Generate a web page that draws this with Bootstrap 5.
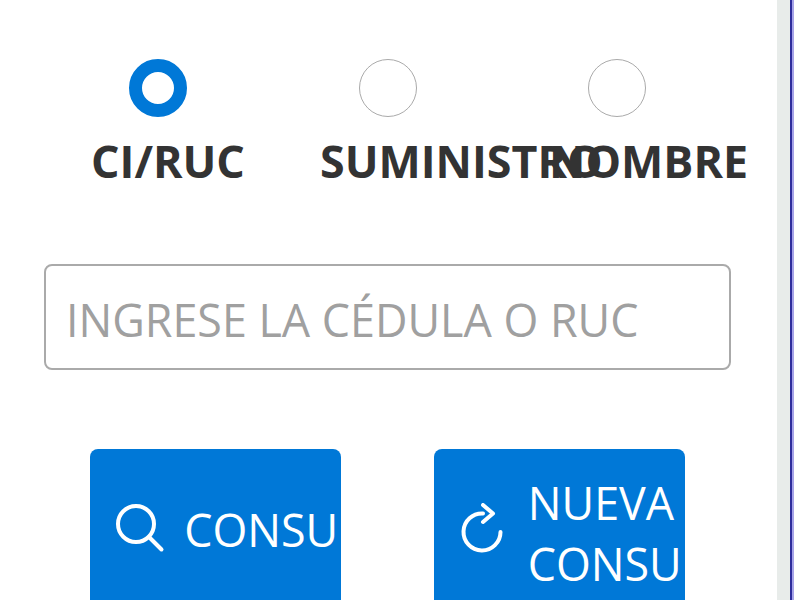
<!DOCTYPE html>
<html lang="es">
<head>
<meta charset="utf-8">
<title>Consulta</title>
<link rel="stylesheet" href="https://cdn.jsdelivr.net/npm/bootstrap@5.3.0/dist/css/bootstrap.min.css">
<style>
html, body { height: 100%; overflow: hidden; }
body { background: #fff; font-family: "Open Sans", "Noto Sans", sans-serif; color: #333; }
.shell { height: 600px; width: 800px; overflow: hidden; }
.panel { width: 777px; padding: 59px 46px 0 44px; }
.edge-a { width: 13px; background: #e8ecea; }
.edge-b { width: 2px; background: #2e2e9c; }
.edge-c { width: 2px; background: #a6a3e8; }
.edge-d { width: 6px; background: #fff; }
.opt { flex: 1 1 0; min-width: 0; }
.opt-dot { width: 58px; height: 58px; border-radius: 50%; border: 1.500px solid #aaa; margin: 0 auto; background: #fff; }
.opt-dot.on { border: 13px solid #0078d7; transform: translateX(-1px); }
.opt-name { font-size: 44.8px; font-weight: 700; line-height: 57px; padding-left: 47px; margin-top: 15px; white-space: nowrap; color: #333; }
.field { height: 106px; margin-top: 75px; border: 2px solid #aaa; border-radius: 8px; font-size: 44.8px; padding: 5px 20px 0; color: #333; }
.field::placeholder { color: #a0a0a0; opacity: 1; }
.acts { margin-top: 79px; }
.act-cell { flex: 1 1 0; }
.act { width: 251px; height: 166px; flex: none; background: #0078d7; border: 0; border-radius: 8px; color: #fff; font-size: 44.8px; line-height: 61px; padding: 0 0 0 25px; overflow: hidden; }
.act-ico { width: 50px; height: 50px; flex: none; margin-bottom: 8px; margin-right: 19px; }
.act-txt { flex: none; text-align: left; padding-bottom: 6px; }
.act-two { padding-left: 26px; }
.act-two .act-ico { margin-right: 18px; }
.act-two .act-txt { padding-bottom: 0; padding-top: 2px; }
</style>
</head>
<body>
<div class="shell d-flex">
  <div class="panel">
    <div class="d-flex">
      <div class="opt"><div class="opt-dot on"></div><div class="opt-name">CI/RUC</div></div>
      <div class="opt"><div class="opt-dot"></div><div class="opt-name">SUMINISTRO</div></div>
      <div class="opt"><div class="opt-dot"></div><div class="opt-name">NOMBRE</div></div>
    </div>
    <input class="form-control field" type="text" placeholder="INGRESE LA CÉDULA O RUC">
    <div class="d-flex acts">
      <div class="act-cell d-flex justify-content-center">
        <button class="act d-flex align-items-center" type="button">
          <svg class="act-ico" viewBox="0 0 50 50" fill="none" stroke="#fff" stroke-width="4" stroke-linecap="round"><circle cx="21" cy="21" r="18"/><path d="M34 34l12.500 12.500"/></svg>
          <span class="act-txt">CONSU</span>
        </button>
      </div>
      <div class="act-cell d-flex justify-content-center">
        <button class="act act-two d-flex align-items-center" type="button">
          <svg class="act-ico" viewBox="0 0 50 50" fill="none" stroke="#fff" stroke-width="4" stroke-linecap="round" stroke-linejoin="round"><path d="M23 10.500A18.500 18.500 0 1 0 40.500 29"/><path d="M23 2l10 8.500-10 8.500"/></svg>
          <span class="act-txt">NUEVA<br>CONSU</span>
        </button>
      </div>
    </div>
  </div>
  <div class="edge-a"></div><div class="edge-b"></div><div class="edge-c"></div><div class="edge-d"></div>
</div>
<script src="https://cdn.jsdelivr.net/npm/bootstrap@5.3.0/dist/js/bootstrap.bundle.min.js"></script>
</body>
</html>
